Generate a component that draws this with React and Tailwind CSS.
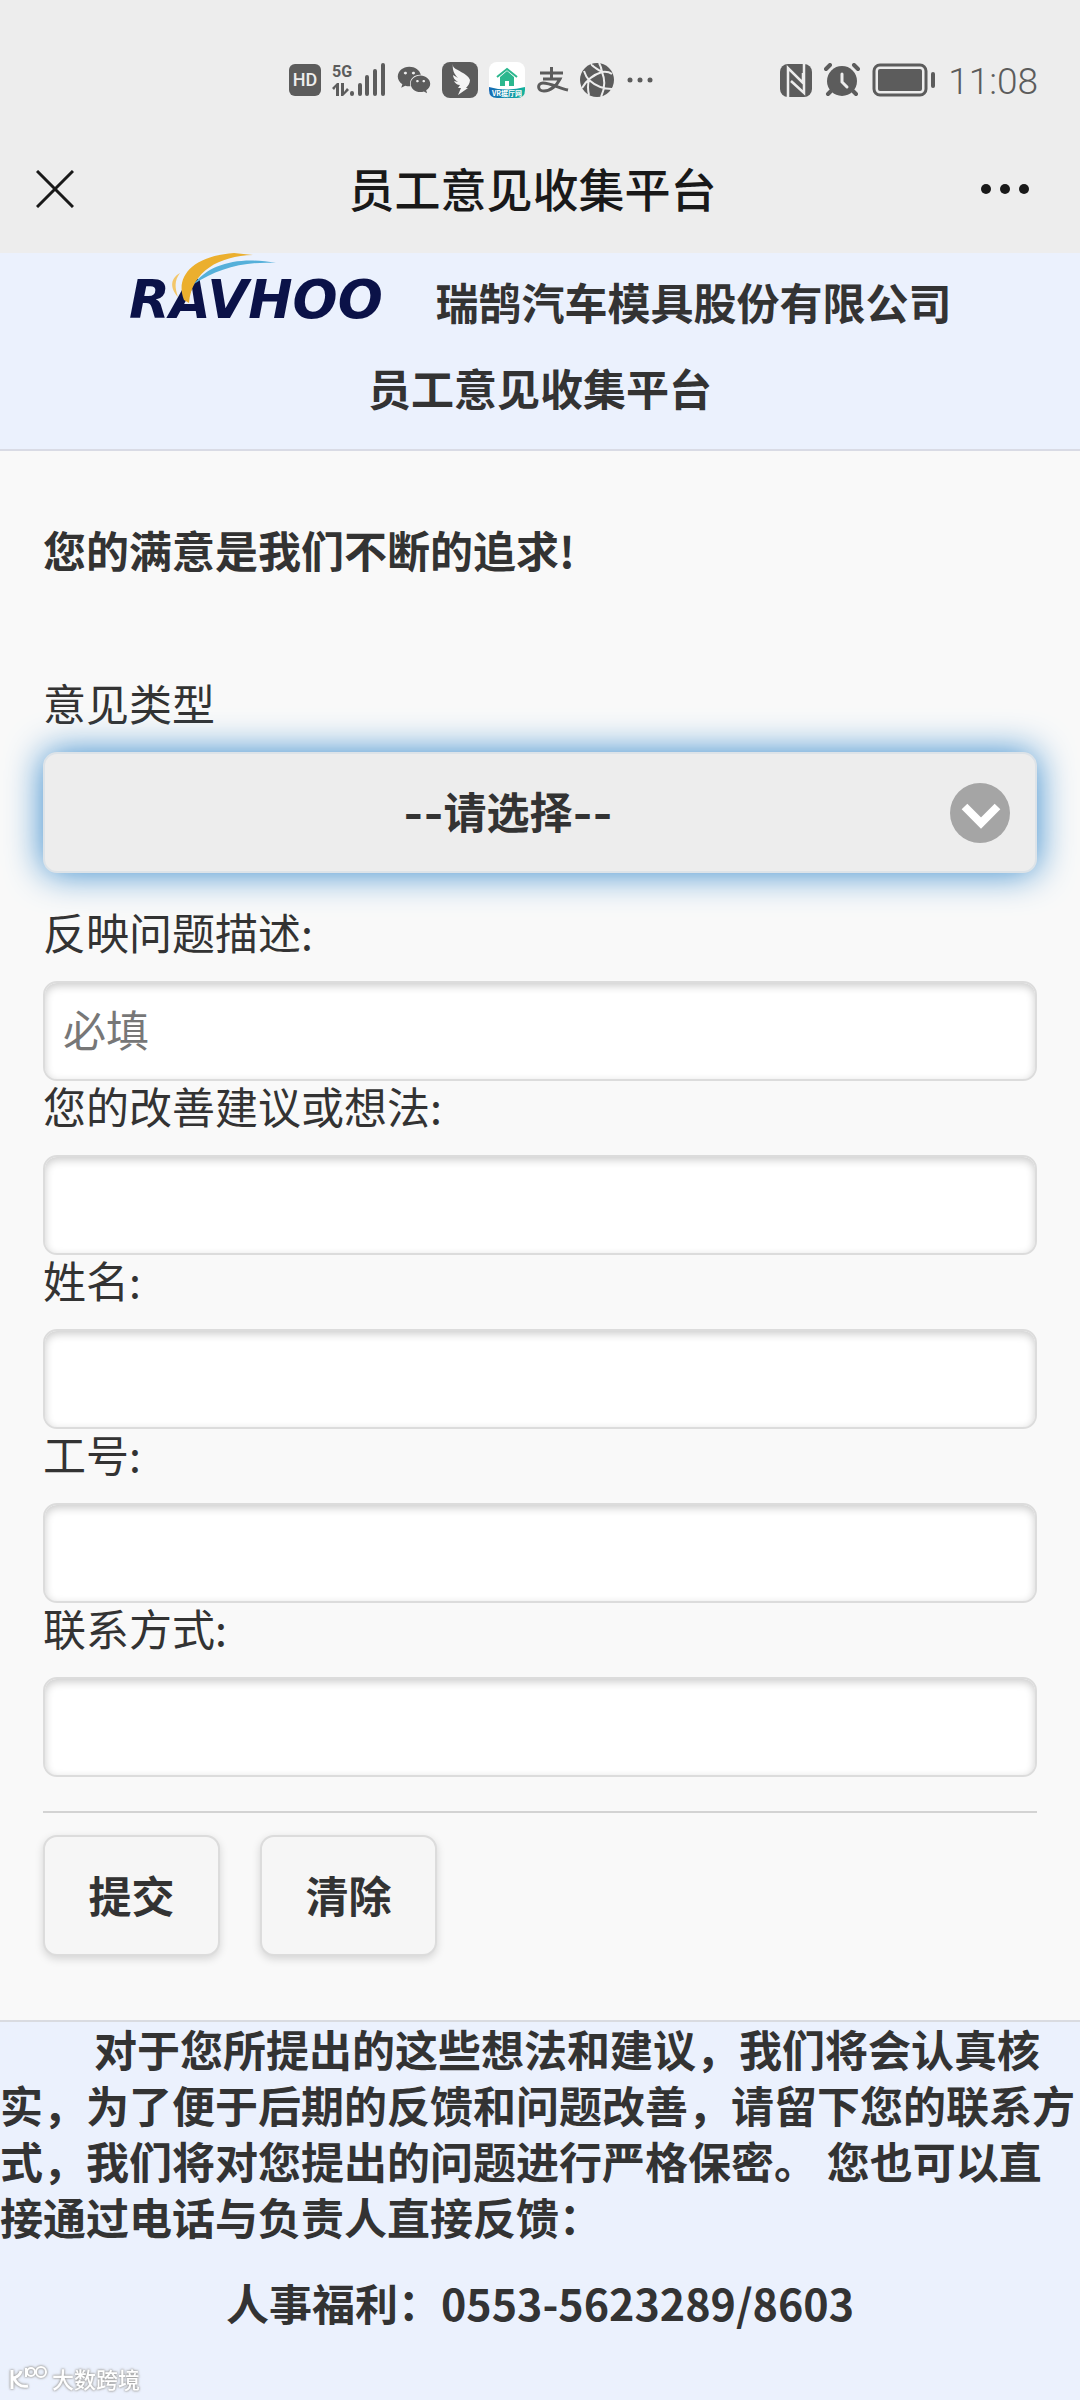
import { useState } from 'react';
import { FaWeixin } from 'react-icons/fa';

const FIELDS = [
  { id: 'problem', label: '反映问题描述:', placeholder: '必填' },
  { id: 'suggestion', label: '您的改善建议或想法:' },
  { id: 'name', label: '姓名:' },
  { id: 'employeeNo', label: '工号:' },
  { id: 'contact', label: '联系方式:' },
];

const EMPTY = { type: '', problem: '', suggestion: '', name: '', employeeNo: '', contact: '' };

function SignalIcon() {
  return (
    <svg width="54" height="36" viewBox="0 0 54 36" fill="currentColor">
      <text x="0" y="15" fontSize="16" fontWeight="700" fontFamily="Roboto, sans-serif">5G</text>
      <path d="M0 26l5-5h2v13H4v-9l-2 3zM9 21h3v9l3-4 2 2-6 6H9z" />
      <g stroke="currentColor" strokeWidth="4" strokeLinecap="round">
        <path d="M20 31v1M28 23v9M35 15v17M43 9v23M51 3v29" />
      </g>
    </svg>
  );
}

function WingIcon() {
  return (
    <svg width="36" height="36" viewBox="0 0 36 36">
      <rect width="36" height="36" rx="8" fill="#5c5c5c" />
      <path d="M11 4c1 4 15 7 17 14 0 3-2 6-4 8h2l-10 7 3-7h-3l2-3c-3 0-5-2-6-4l4 1c-3-2-5-4-5-7l5 3c-4-4-6-9-5-14z" fill="#f4f4f4" />
    </svg>
  );
}

function HouseIcon() {
  return (
    <svg width="36" height="36" viewBox="0 0 36 36">
      <defs>
        <linearGradient id="vr" x1="0" x2="1">
          <stop offset="0" stopColor="#1769b5" />
          <stop offset="1" stopColor="#13b39c" />
        </linearGradient>
      </defs>
      <rect width="36" height="36" rx="8" fill="#fff" />
      <path d="M0 25q18 5 36 0v3q0 8-8 8H8q-8 0-8-8z" fill="url(#vr)" />
      <path d="M8 15L18 7l10 8" fill="none" stroke="#2cb78e" strokeWidth="2" />
      <path d="M11 15l7-6 7 6v9h-5v-5h-4v5h-5z" fill="#2cb78e" />
      <text x="18" y="34" fontSize="7" fontWeight="700" fill="#fff" textAnchor="middle" fontFamily="'Noto Sans CJK SC', sans-serif">VR据厅网</text>
    </svg>
  );
}

function AlipayIcon() {
  return (
    <svg width="33" height="28" viewBox="0 0 33 28" fill="none" stroke="currentColor" strokeWidth="3">
      <path d="M4 7h23M15.500 1v12M7 13h17c-3 6-9 12-16 12-7 0-7-8-1-8 7 0 16 5 25 7" />
    </svg>
  );
}

function GlobeIcon() {
  return (
    <svg width="34" height="34" viewBox="0 0 34 34" fill="none" stroke="#ededed" strokeWidth="2">
      <circle cx="17" cy="17" r="17" fill="#5c5c5c" stroke="none" />
      <path d="M19 0q2 3 3 9 5 12-1 25M2 25Q9 13 22 9q6-1 10 2M4 8q2 6 5 9 10 9 23 9M22 9Q10 2 12 1M9 17q-2 7 0 15" />
    </svg>
  );
}

function NfcIcon() {
  return (
    <svg width="32" height="33" viewBox="0 0 32 33">
      <rect width="32" height="33" rx="8" fill="#5c5c5c" />
      <path d="M8 33V4l15 15V9M24 0v29L11 17" fill="none" stroke="#ededed" strokeWidth="2.500" />
    </svg>
  );
}

function AlarmIcon() {
  return (
    <svg width="36" height="34" viewBox="0 0 36 34" fill="none" stroke="currentColor" strokeWidth="4" strokeLinecap="round">
      <circle cx="18" cy="18" r="15" fill="currentColor" stroke="none" />
      <path d="M2 6l4-4M34 6l-4-4M7 28l-3 3M29 28l3 3" />
      <path d="M18 11v8l5 5" stroke="#ededed" strokeWidth="3" />
    </svg>
  );
}

function BatteryIcon() {
  return (
    <svg width="64" height="34" viewBox="0 0 64 34" fill="currentColor">
      <rect x="2" y="2" width="52" height="30" rx="6" fill="none" stroke="currentColor" strokeWidth="3" />
      <rect x="6" y="6" width="44" height="22" rx="2" />
      <rect x="59" y="9" width="4" height="16" rx="2" />
    </svg>
  );
}

function StatusBar() {
  return (
    <div className="flex h-[126px] items-center justify-between pl-[289px] pr-[42px] pt-[34px] text-[#5c5c5c]">
      <div className="flex items-center gap-[11px]">
        <span className="flex h-8 w-8 items-center justify-center rounded-md bg-[#5c5c5c] font-[Roboto] text-[18px] font-medium text-[#ededed]">
          HD
        </span>
        <SignalIcon />
        <FaWeixin size={34} />
        <WingIcon />
        <HouseIcon />
        <AlipayIcon />
        <GlobeIcon />
        <svg width="28" height="6" viewBox="0 0 28 6" fill="currentColor">
          <circle cx="5" cy="3" r="2.500" />
          <circle cx="15" cy="3" r="2.500" />
          <circle cx="25" cy="3" r="2.500" />
        </svg>
      </div>
      <div className="flex items-center gap-3">
        <NfcIcon />
        <AlarmIcon />
        <BatteryIcon />
        <span className="pt-1 font-[Roboto] text-[37px] leading-10 font-light">11:08</span>
      </div>
    </div>
  );
}

function TitleBar() {
  return (
    <div className="flex h-[127px] items-center justify-between pb-0.5 pl-9 pr-[51px] text-[#191919]">
      <button type="button" aria-label="关闭" className="w-12">
        <svg width="38" height="38" viewBox="0 0 38 38" stroke="currentColor" strokeWidth="3">
          <path d="M1 1l36 36M37 1L1 37" />
        </svg>
      </button>
      <h1 className="pb-1 text-[46px] leading-[56px] font-medium">员工意见收集平台</h1>
      <button type="button" aria-label="更多">
        <svg width="48" height="10" viewBox="0 0 48 10" fill="currentColor">
          <circle cx="5" cy="5" r="5" />
          <circle cx="24" cy="5" r="5" />
          <circle cx="43" cy="5" r="5" />
        </svg>
      </button>
    </div>
  );
}

function Logo() {
  return (
    <svg width="259" height="79" viewBox="0 0 259 79" role="img" aria-label="RAVHOO">
      <text x="0" y="65" fontSize="53" fontWeight="700" fontStyle="italic" fill="#0b1248" fontFamily="'DejaVu Sans', sans-serif">
        RAVHOO
      </text>
      <path d="M55 47C46 25 62 3 105 0l19 2C90 3 63 18 60 50z" fill="#ebaf2e" />
      <path d="M49 44C40 34 42 25 51 20 45 28 46 35 49 44z" fill="#f3c76b" />
      <path d="M65 31C80 11 110 3 147 10 115 8 88 16 65 31z" fill="#55b0da" />
    </svg>
  );
}

function TextField({ id, label, placeholder, value, onChange }) {
  return (
    <div>
      <label htmlFor={id} className="mb-[26px] block leading-12">{label}</label>
      <input
        id={id}
        name={id}
        type="text"
        placeholder={placeholder}
        value={value}
        onChange={onChange}
        className="block h-[100px] w-full rounded-[14px] border-2 border-[#dcdcdc] bg-white px-[18px] pb-1.5 shadow-[inset_0_3px_9px_rgba(0,0,0,0.2)] outline-none placeholder:text-[#777]"
      />
    </div>
  );
}

export default function App() {
  const [values, setValues] = useState(EMPTY);

  const handleChange = (e) => setValues({ ...values, [e.target.name]: e.target.value });

  const buttonClass =
    'h-[121px] w-[177px] rounded-[14px] border-2 border-[#dcdcdc] bg-[#f6f6f6] pb-1 font-bold shadow-[0_3px_9px_rgba(0,0,0,0.15)]';

  return (
    <div
      lang="zh-CN"
      className="flex min-h-screen flex-col bg-[#f9f9f9] font-['Noto_Sans_CJK_SC',sans-serif] text-[43px] leading-[56px] text-[#333]"
    >
      <div className="bg-[#ededed]">
        <StatusBar />
        <TitleBar />
      </div>

      <header className="border-b-2 border-[#d9dbe5] bg-[#ebf1fd] pb-[34px] text-center font-bold">
        <div className="flex justify-center gap-12">
          <Logo />
          <h2 className="self-end pb-[3px]">瑞鹄汽车模具股份有限公司</h2>
        </div>
        <h2 className="mt-[27px]">员工意见收集平台</h2>
      </header>

      <form className="px-[43px] pt-[70px]" onSubmit={(e) => e.preventDefault()}>
        <h3 className="font-bold">您的满意是我们不断的追求!</h3>

        <label htmlFor="type" className="mt-[101px] mb-[26px] block leading-12">意见类型</label>
        <div className="relative mb-[34px]">
          <select
            id="type"
            name="type"
            value={values.type}
            onChange={handleChange}
            className="block h-[121px] w-full appearance-none rounded-[14px] border-2 border-[#dde3e8] bg-[#ededed] pr-16 text-center font-[Inter,'Noto_Sans_CJK_SC',sans-serif] font-bold shadow-[0_0_36px_#3388cc] outline-none [text-align-last:center]"
          >
            <option value="">--请选择--</option>
          </select>
          {/* Dropdown arrow */}
          <svg
            className="pointer-events-none absolute inset-y-0 right-[27px] my-auto"
            width="60"
            height="60"
            viewBox="0 0 60 60"
          >
            <circle cx="30" cy="30" r="30" fill="#a5a5a5" />
            <path d="M14.500 23.500L31 40l16.500-16.500" fill="none" stroke="#fff" strokeWidth="8" />
          </svg>
        </div>

        {FIELDS.map((field) => (
          <TextField key={field.id} {...field} value={values[field.id]} onChange={handleChange} />
        ))}

        <hr className="mt-[34px] border-t-2 border-[#d3d3d3]" />

        <div className="mt-[22px] mb-[64px] flex gap-10">
          <button type="submit" className={buttonClass}>提交</button>
          <button type="button" className={buttonClass} onClick={() => setValues(EMPTY)}>清除</button>
        </div>
      </form>

      <footer className="grow border-t-2 border-[#d9dbe0] bg-[#ebf1fd] font-bold">
        <p className="-mt-0.5 indent-[94px]">
          对于您所提出的这些想法和建议，我们将会认真核实，为了便于后期的反馈和问题改善，请留下您的联系方式，我们将对您提出的问题进行严格保密。
          您也可以直接通过电话与负责人直接反馈：
        </p>
        <p className="mt-[30px] text-center">人事福利：0553-5623289/8603</p>

        {/* Watermark */}
        <div className="mt-9 flex items-center gap-1 pb-2 pl-2 text-[22px] leading-6 font-medium text-white [filter:drop-shadow(0_0_1px_#999)_drop-shadow(0_0_1px_#bbb)]">
          <svg width="40" height="24" viewBox="0 0 40 24" fill="none" stroke="currentColor" strokeWidth="3">
            <path d="M4 4v19M13 5q-1 5-7 7 4 10 14 8" />
            <path d="M18 11V2" strokeWidth="2" />
            <circle cx="23" cy="6" r="4" strokeWidth="2" />
            <circle cx="33" cy="6" r="5" strokeWidth="2" />
          </svg>
          <span>大数跨境</span>
        </div>
      </footer>
    </div>
  );
}
